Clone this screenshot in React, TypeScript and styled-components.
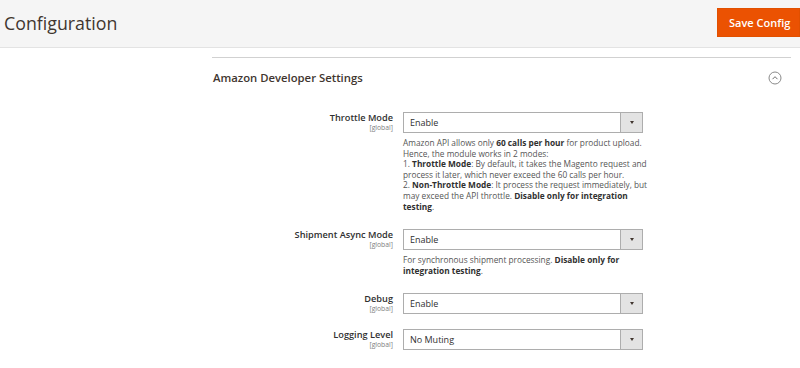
import React from "react";
import styled, { createGlobalStyle } from "styled-components";

const GlobalStyle = createGlobalStyle`
  html, body {
    margin: 0;
    padding: 0;
    background: #fff;
    font-family: "Open Sans", "Liberation Sans", sans-serif;
    color: #303030;
  }
`;

const Page = styled.div`
  width: 800px;
  height: 368px;
  overflow: hidden;
  background: #fff;
`;

const Header = styled.header`
  height: 47px;
  background: #f5f5f5;
  border-bottom: 1px solid #e3e3e3;
  display: flex;
  align-items: center;
  justify-content: space-between;
  padding-left: 4px;
`;

const Title = styled.h1`
  margin: 0 0 2px;
  font-size: 17.8px;
  font-weight: 400;
  color: #41362f;
`;

const SaveButton = styled.button`
  align-self: flex-start;
  margin-top: 8px;
  height: 29px;
  width: 83px;
  padding: 0 0 0 11px;
  text-align: left;
  border: 1px solid #e15000;
  background: #eb5202;
  color: #fff;
  font-family: inherit;
  font-size: 11px;
  font-weight: 600;
  white-space: nowrap;
`;

const Main = styled.main`
  padding: 9px 9px 0 212px;
`;

const Section = styled.section`
  border-top: 1px solid #d1d1d1;
`;

const SectionHead = styled.div`
  display: flex;
  align-items: center;
  justify-content: space-between;
  height: 39px;
  padding-left: 1px;
  padding-right: 9px;
  margin-bottom: 15px;
`;

const SectionTitle = styled.h2`
  margin: 0;
  font-size: 11.3px;
  font-weight: 600;
  color: #41362f;
`;

const Row = styled.div<{ $gap: number }>`
  display: grid;
  grid-template-columns: 181px 240px;
  column-gap: 10px;
  margin-bottom: ${(p) => p.$gap}px;
`;

const Label = styled.div`
  text-align: right;
`;

const LabelText = styled.div`
  font-size: 9.2px;
  font-weight: 600;
  line-height: 12px;
  color: #303030;
`;

const Scope = styled.div`
  font-size: 6.8px;
  line-height: 8px;
  color: #808080;
`;

const Select = styled.div`
  height: 21px;
  box-sizing: border-box;
  border: 1px solid #adadad;
  display: flex;
  align-items: stretch;
  background: #fff;
`;

const SelectValue = styled.div`
  flex: 1;
  display: flex;
  align-items: center;
  padding-left: 6px;
  font-size: 9px;
  color: #303030;
`;

const SelectToggle = styled.div`
  width: 21px;
  background: #e3e3e3;
  border-left: 1px solid #adadad;
  display: flex;
  align-items: center;
  justify-content: center;

  &::after {
    content: "";
    border-left: 2.5px solid transparent;
    border-right: 2.5px solid transparent;
    border-top: 3px solid #41362f;
  }
`;

const Note = styled.div`
  grid-column: 2;
  margin-top: 5px;
  font-size: 8.3px;
  line-height: 10.6px;
  color: #555;
  white-space: nowrap;

  b {
    font-weight: 700;
    color: #303030;
  }
`;

const CollapseIcon = () => (
  <svg width="14" height="14" viewBox="0 0 14 14">
    <circle cx="7" cy="7" r="6" fill="none" stroke="#8a8a8a" strokeWidth="1" />
    <path d="M4.5 8.2 L7 5.7 L9.5 8.2" fill="none" stroke="#6e6e6e" strokeWidth="1" />
  </svg>
);

type FieldProps = {
  label: string;
  value: string;
  gap: number;
  children?: React.ReactNode;
};

const Field = ({ label, value, gap, children }: FieldProps) => (
  <Row $gap={gap}>
    <Label>
      <LabelText>{label}</LabelText>
      <Scope>[global]</Scope>
    </Label>
    <div>
      <Select>
        <SelectValue>{value}</SelectValue>
        <SelectToggle />
      </Select>
      {children && <Note>{children}</Note>}
    </div>
  </Row>
);

export default function App() {
  return (
    <Page>
      <GlobalStyle />
      <Header>
        <Title>Configuration</Title>
        <SaveButton>Save Config</SaveButton>
      </Header>
      <Main>
        <Section>
          <SectionHead>
            <SectionTitle>Amazon Developer Settings</SectionTitle>
            <CollapseIcon />
          </SectionHead>
          <Field label="Throttle Mode" value="Enable" gap={17}>
            Amazon API allows only <b>60 calls per hour</b> for product upload.
            <br />
            Hence, the module works in 2 modes:
            <br />
            1. <b>Throttle Mode</b>: By default, it takes the Magento request and
            <br />
            process it later, which never exceed the 60 calls per hour.
            <br />
            2. <b>Non-Throttle Mode</b>: It process the request immediately, but
            <br />
            may exceed the API throttle. <b>Disable only for integration</b>
            <br />
            <b>testing</b>.
          </Field>
          <Field label="Shipment Async Mode" value="Enable" gap={17}>
            For synchronous shipment processing. <b>Disable only for</b>
            <br />
            <b>integration testing</b>.
          </Field>
          <Field label="Debug" value="Enable" gap={15} />
          <Field label="Logging Level" value="No Muting" gap={15} />
        </Section>
      </Main>
    </Page>
  );
}
